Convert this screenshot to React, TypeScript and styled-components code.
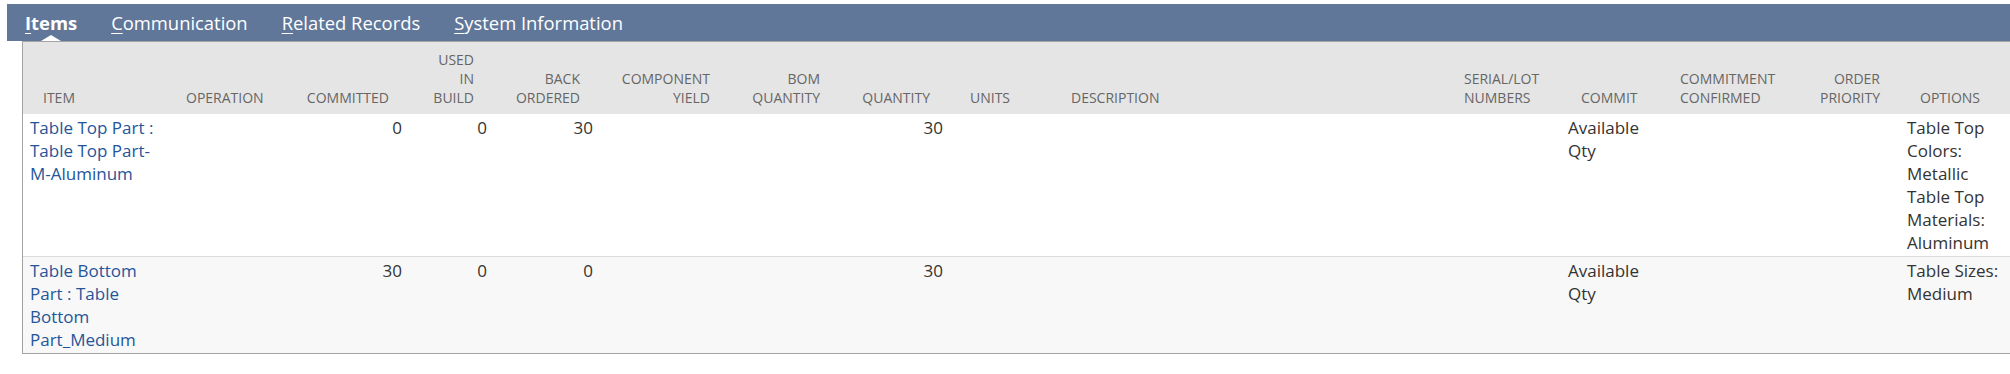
import React from "react";
import styled, { createGlobalStyle } from "styled-components";

const GlobalStyle = createGlobalStyle`
  html, body {
    margin: 0;
    padding: 0;
    background: #fff;
    overflow: hidden;
  }
  body {
    font-family: "Open Sans", "Liberation Sans", sans-serif;
  }
`;

const Page = styled.div`
  padding: 4px 0 0 7px;
  width: 2040px;
`;

const TabBar = styled.nav`
  display: flex;
  align-items: center;
  height: 37px;
  padding-left: 1px;
  background: #607799;
`;

const Tab = styled.a<{ $active?: boolean }>`
  position: relative;
  padding: 0 17px;
  color: #fff;
  font-size: 18.4px;
  font-weight: ${(p) => (p.$active ? 700 : 400)};
  line-height: 37px;
  text-decoration: none;
  white-space: nowrap;
  cursor: pointer;

  u {
    text-decoration-thickness: 1px;
    text-underline-offset: 3px;
  }

  ${(p) =>
    p.$active &&
    `
    &::after {
      content: "";
      position: absolute;
      left: 50%;
      bottom: 0;
      margin-left: -10px;
      border-left: 10px solid transparent;
      border-right: 10px solid transparent;
      border-bottom: 6px solid #fff;
    }
  `}
`;

const ListBox = styled.div`
  margin-left: 15px;
  width: 1997px;
  border: 1px solid #a3a3a3;
  border-right: none;
`;

const Grid = styled.table`
  width: 1997px;
  border-collapse: collapse;
  table-layout: fixed;
`;

const Col = styled.col<{ $w: number }>`
  width: ${(p) => p.$w}px;
`;

const HeadCell = styled.th<{ $align: "left" | "right" }>`
  padding: 8px 20px 7px;
  background: #e5e5e5;
  color: #666;
  font-size: 14px;
  font-weight: 400;
  line-height: 19px;
  text-align: ${(p) => p.$align};
  vertical-align: bottom;
  text-transform: uppercase;
  white-space: nowrap;
`;

const Row = styled.tr<{ $alt?: boolean }>`
  background: ${(p) => (p.$alt ? "#f8f8f8" : "#fff")};

  & + & {
    border-top: 1px solid #dcdcdc;
  }
`;

const Cell = styled.td<{ $align: "left" | "right" }>`
  padding: 2px 7px;
  color: #333;
  font-size: 17px;
  line-height: 23px;
  text-align: ${(p) => p.$align};
  vertical-align: top;
`;

const ItemLink = styled.a`
  color: #255599;
  text-decoration: none;
  cursor: pointer;
`;

type Align = "left" | "right";

type Column = {
  key: string;
  label: string[];
  align: Align;
  width: number;
};

const columns: Column[] = [
  { key: "item", label: ["Item"], align: "left", width: 143 },
  { key: "operation", label: ["Operation"], align: "left", width: 119 },
  { key: "committed", label: ["Committed"], align: "right", width: 124 },
  { key: "used", label: ["Used", "in", "Build"], align: "right", width: 85 },
  { key: "back", label: ["Back", "Ordered"], align: "right", width: 106 },
  { key: "yield", label: ["Component", "Yield"], align: "right", width: 130 },
  { key: "bom", label: ["BOM", "Quantity"], align: "right", width: 110 },
  { key: "quantity", label: ["Quantity"], align: "right", width: 110 },
  { key: "units", label: ["Units"], align: "left", width: 101 },
  { key: "description", label: ["Description"], align: "left", width: 393 },
  { key: "serial", label: ["Serial/Lot", "Numbers"], align: "left", width: 117 },
  { key: "commit", label: ["Commit"], align: "left", width: 99 },
  { key: "confirmed", label: ["Commitment", "Confirmed"], align: "left", width: 138 },
  { key: "priority", label: ["Order", "Priority"], align: "right", width: 102 },
  { key: "options", label: ["Options"], align: "left", width: 120 },
];

type Line = {
  item: string;
  committed: string;
  used: string;
  back: string;
  quantity: string;
  commit: string;
  options: string[];
};

const lines: Line[] = [
  {
    item: "Table Top Part : Table Top Part-M-Aluminum",
    committed: "0",
    used: "0",
    back: "30",
    quantity: "30",
    commit: "Available Qty",
    options: ["Table Top Colors: Metallic", "Table Top Materials: Aluminum"],
  },
  {
    item: "Table Bottom Part : Table Bottom Part_Medium",
    committed: "30",
    used: "0",
    back: "0",
    quantity: "30",
    commit: "Available Qty",
    options: ["Table Sizes: Medium"],
  },
];

const tabs = ["Items", "Communication", "Related Records", "System Information"];

const renderCell = (col: Column, line: Line) => {
  switch (col.key) {
    case "item":
      return <ItemLink>{line.item}</ItemLink>;
    case "committed":
      return line.committed;
    case "used":
      return line.used;
    case "back":
      return line.back;
    case "quantity":
      return line.quantity;
    case "commit":
      return line.commit;
    case "options":
      return line.options.map((o, i) => (
        <React.Fragment key={o}>
          {i > 0 && <br />}
          {o}
        </React.Fragment>
      ));
    default:
      return null;
  }
};

export default function App() {
  return (
    <>
      <GlobalStyle />
      <Page>
        <TabBar>
          {tabs.map((t, i) => (
            <Tab key={t} $active={i === 0}>
              <u>{t[0]}</u>
              {t.slice(1)}
            </Tab>
          ))}
        </TabBar>
        <ListBox>
          <Grid>
            <colgroup>
              {columns.map((c) => (
                <Col key={c.key} $w={c.width} />
              ))}
            </colgroup>
            <thead>
              <tr>
                {columns.map((c) => (
                  <HeadCell key={c.key} $align={c.align}>
                    {c.label.map((l, i) => (
                      <React.Fragment key={l}>
                        {i > 0 && <br />}
                        {l}
                      </React.Fragment>
                    ))}
                  </HeadCell>
                ))}
              </tr>
            </thead>
            <tbody>
              {lines.map((line, r) => (
                <Row key={line.item} $alt={r % 2 === 1}>
                  {columns.map((c) => (
                    <Cell key={c.key} $align={c.align}>
                      {renderCell(c, line)}
                    </Cell>
                  ))}
                </Row>
              ))}
            </tbody>
          </Grid>
        </ListBox>
      </Page>
    </>
  );
}
